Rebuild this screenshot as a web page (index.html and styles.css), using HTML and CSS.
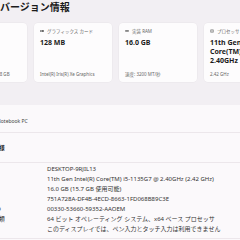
FILE: index.html
```html
<!DOCTYPE html>
<html lang="ja">
<head>
<meta charset="utf-8">
<title>バージョン情報</title>
<link rel="stylesheet" href="styles.css">
</head>
<body>
<div class="page">
  <h1 class="title"><span class="crumb">システム ›</span><span>バージョン情報</span></h1>

  <div class="cards">
    <div class="card">
      <div class="card-label">
        <svg class="ico" viewBox="0 0 10 10"><rect x="1" y="3" width="8" height="4" rx="0.8" fill="none" stroke="#555" stroke-width="1"/></svg>
        <span>ストレージ</span>
      </div>
      <div class="card-value">238 GB</div>
      <div class="card-caption">使用済み 98.5 GB / 238 GB</div>
    </div>
    <div class="card">
      <div class="card-label">
        <svg class="ico" viewBox="0 0 10 10"><rect x="0.5" y="2.5" width="9" height="5" rx="0.6" fill="#6a6a6a"/><rect x="2" y="4" width="3" height="2" fill="#f4f4f4"/></svg>
        <span>グラフィックス カード</span>
      </div>
      <div class="card-value">128 MB</div>
      <div class="card-caption">Intel(R) Iris(R) Xe Graphics</div>
    </div>
    <div class="card">
      <div class="card-label">
        <svg class="ico" viewBox="0 0 10 10"><rect x="0.5" y="3" width="9" height="3.5" fill="#6a6a6a"/><rect x="1.5" y="6.5" width="7" height="1" fill="#8a8a8a"/></svg>
        <span>実装 RAM</span>
      </div>
      <div class="card-value">16.0 GB</div>
      <div class="card-caption">速度: 3200 MT/秒</div>
    </div>
    <div class="card">
      <div class="card-label">
        <svg class="ico" viewBox="0 0 10 10"><rect x="1" y="1" width="8" height="8" rx="0.8" fill="#7a7a7a"/><rect x="3" y="3" width="4" height="4" fill="#e6e6e6"/></svg>
        <span>プロセッサ</span>
      </div>
      <div class="card-value">11th Gen Intel(R)<br>Core(TM) i5-1135G7 @<br>2.40GHz</div>
      <div class="card-caption">2.42 GHz</div>
    </div>
  </div>

  <section class="panel">
    <div class="device-row">
      <span class="model">Notebook PC</span>
    </div>
    <div class="spec-head">デバイスの仕様</div>
    <div class="specs">
      <span class="lbl">デバイス名</span><span class="val">DESKTOP-9RJIL13</span>
      <span class="lbl">プロセッサ</span><span class="val">11th Gen Intel(R) Core(TM) i5-1135G7 @ 2.40GHz (2.42 GHz)</span>
      <span class="lbl">実装 RAM</span><span class="val">16.0 GB (15.7 GB 使用可能)</span>
      <span class="lbl">デバイス ID</span><span class="val">751A728A-DF4B-4ECD-8663-1FD068B89C3E</span>
      <span class="lbl">プロダクト ID</span><span class="val">00330-53660-59352-AAOEM</span>
      <span class="lbl">システムの種類</span><span class="val">64 ビット オペレーティング システム、x64 ベース プロセッサ</span>
      <span class="lbl">ペンとタッチ</span><span class="val">このディスプレイでは、ペン入力とタッチ入力は利用できません</span>
    </div>
    <div class="next-row"></div>
  </section>
</div>
</body>
</html>
```

FILE: styles.css
```css
html, body {
  margin: 0;
  padding: 0;
  background: #f2eff3;
  overflow: hidden;
}

.page {
  margin-left: -51px;
  width: 340px;
  font-family: "Noto Sans", "Noto Sans CJK JP", sans-serif;
  color: #1b1b1b;
}

.title {
  margin: 0;
  padding-top: 1px;
  display: flex;
  font-size: 10px;
  line-height: 12px;
  font-weight: 600;
  white-space: nowrap;
  font-family: "Noto Sans CJK JP", sans-serif;
}

.crumb {
  width: 51px;
  overflow: hidden;
  color: #666;
}

.cards {
  margin-top: 10px;
  display: grid;
  grid-template-columns: repeat(4, 78px);
  gap: 7px;
  height: 59px;
}

.card {
  background: #fdfcfd;
  border-radius: 4px;
  padding: 5px 6px;
  display: flex;
  flex-direction: column;
  box-shadow: 0 0 0 0.5px rgba(0, 0, 0, 0.04);
}

.card-label {
  display: flex;
  align-items: center;
  gap: 3px;
  font-size: 4.5px;
  line-height: 6px;
  color: #666;
  white-space: nowrap;
}

.ico {
  width: 4px;
  height: 4px;
  flex: none;
}

.card-value {
  margin-top: 4px;
  font-size: 7px;
  line-height: 9px;
  font-weight: 700;
  white-space: nowrap;
}

.card-caption {
  margin-top: auto;
  font-size: 4.5px;
  line-height: 6px;
  color: #666;
  white-space: nowrap;
}

.panel {
  margin-top: 23px;
  background: #fbf9fb;
}

.device-row {
  padding: 13px 0 8px 48px;
  font-size: 5px;
  line-height: 6px;
  color: #444;
}

.spec-head {
  border-top: 1px solid #ece7eb;
  height: 29px;
  display: flex;
  align-items: center;
  padding-left: 14px;
  font-size: 6px;
  font-weight: 600;
}

.specs {
  border-top: 1px solid #ece7eb;
  padding: 1px 0 4px 14px;
  display: grid;
  grid-template-columns: 84px auto;
  font-size: 6px;
  line-height: 10px;
  color: #333;
  white-space: nowrap;
  border-bottom: 1px solid #ece7eb;
}

.lbl {
  color: #1b1b1b;
}

.next-row {
  height: 10px;
}
```
